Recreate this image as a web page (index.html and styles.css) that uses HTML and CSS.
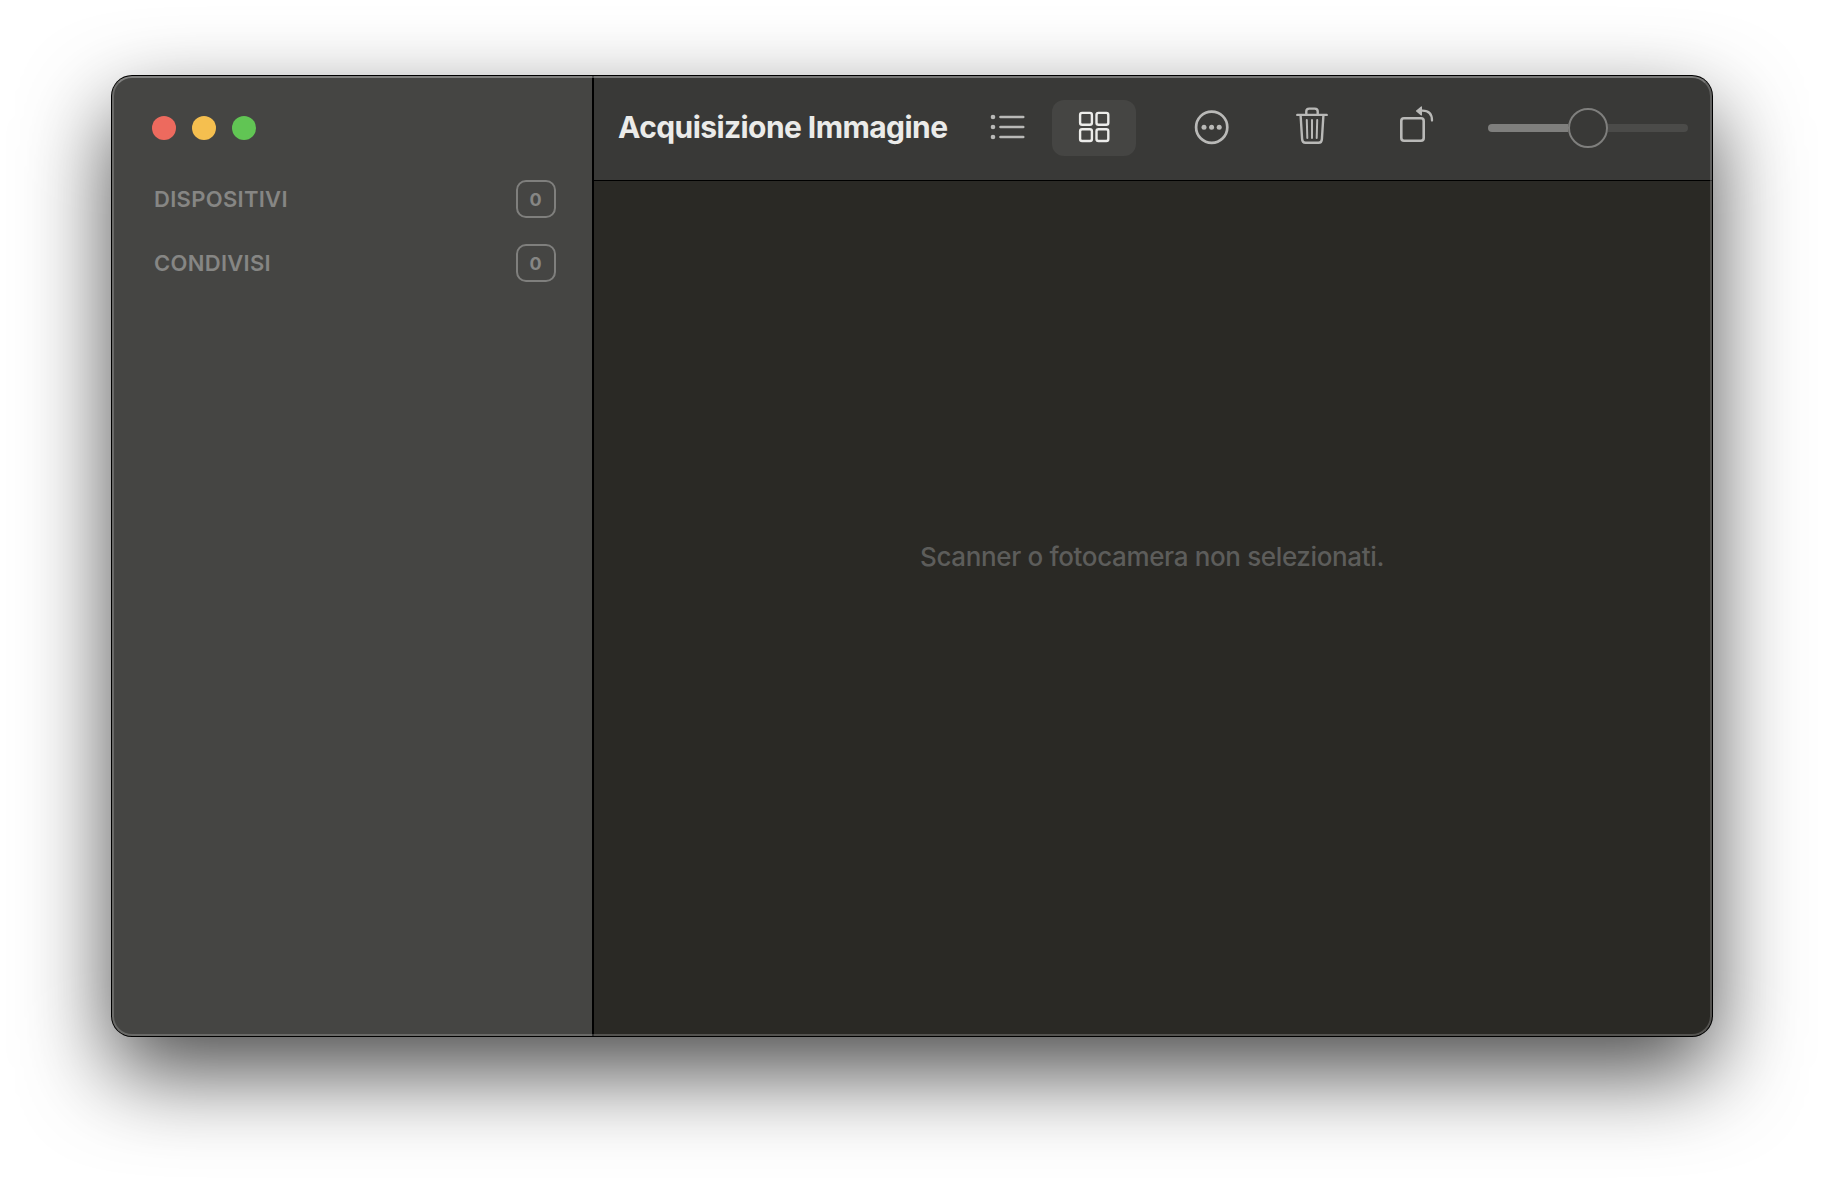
FILE: index.html
```html
<!DOCTYPE html>
<html lang="it">
<head>
<meta charset="utf-8">
<title>Acquisizione Immagine</title>
<link rel="stylesheet" href="styles.css">
</head>
<body>
<div class="window">
  <aside class="sidebar">
    <div class="lights">
      <span class="light close"></span>
      <span class="light minimize"></span>
      <span class="light expand"></span>
    </div>
    <div class="section"><span class="label devices">DISPOSITIVI</span><span class="badge">0</span></div>
    <div class="section"><span class="label shared">CONDIVISI</span><span class="badge">0</span></div>
  </aside>
  <main class="main">
    <header class="toolbar">
      <h1 class="title">Acquisizione Immagine</h1>
      <button class="tool list" aria-label="Elenco">
        <svg width="84" height="56" viewBox="0 0 84 56">
          <g fill="currentColor"><circle cx="25" cy="17" r="2.3"/><circle cx="25" cy="27" r="2.3"/><circle cx="25" cy="37" r="2.3"/></g>
          <path d="M32.5 17H55.2M32.5 27H55.2M32.5 37H55.2" fill="none" stroke="currentColor" stroke-width="2.7" stroke-linecap="round"/>
        </svg>
      </button>
      <button class="tool grid" aria-label="Griglia">
        <svg width="84" height="56" viewBox="0 0 84 56" fill="none" stroke="currentColor" stroke-width="2.4">
          <rect x="28.1" y="12.9" width="11.8" height="11.8" rx="2"/><rect x="44.5" y="12.9" width="11.8" height="11.8" rx="2"/>
          <rect x="28.1" y="29.2" width="11.8" height="11.8" rx="2"/><rect x="44.5" y="29.2" width="11.8" height="11.8" rx="2"/>
        </svg>
      </button>
      <button class="tool more" aria-label="Altro">
        <svg width="36" height="36" viewBox="0 0 36 36">
          <circle cx="17.7" cy="17.2" r="15.6" fill="none" stroke="currentColor" stroke-width="2.7"/>
          <g fill="currentColor"><circle cx="10" cy="17.3" r="2.5"/><circle cx="17.6" cy="17.3" r="2.5"/><circle cx="25.2" cy="17.3" r="2.5"/></g>
        </svg>
      </button>
      <button class="tool trash" aria-label="Elimina">
        <svg width="36" height="44" viewBox="0 0 36 44" fill="none" stroke="currentColor" stroke-linecap="round" stroke-linejoin="round">
          <path d="M3.3 8.9H32.7M12.3 8.5V5.6Q12.3 2.6 15.2 2.6H20.8Q23.7 2.6 23.7 5.6V8.5M6.6 9.5L8.1 33.1Q8.3 36.8 11.5 36.8H24.5Q27.7 36.8 27.9 33.1L29.4 9.5" stroke-width="2.4"/>
          <path d="M12.8 14L13.3 32M18 14V32M23.2 14L22.7 32" stroke-width="2"/>
        </svg>
      </button>
      <button class="tool rotate" aria-label="Ruota">
        <svg width="38" height="44" viewBox="0 0 38 44" fill="none" stroke="currentColor" stroke-width="2.6">
          <rect x="3.3" y="12.3" width="22.4" height="22.4" rx="2.7"/>
          <path d="M22.5 4.7H24.5Q34 4.7 34 14.5" stroke-width="2.3" stroke-linecap="round"/>
          <path d="M18.6 5L23.4 1V9Z" fill="currentColor" stroke-width="1.2" stroke-linejoin="round"/>
        </svg>
      </button>
      <div class="slider"><span class="fill"></span><span class="knob"></span><span class="rest"></span></div>
    </header>
    <section class="content"><p class="message">Scanner o fotocamera non selezionati.</p></section>
  </main>
</div>
</body>
</html>
```
FILE: styles.css
```css
* { box-sizing: border-box; }
body {
  margin: 0;
  height: 1184px;
  padding: 76px 112px 148px;
  overflow: hidden;
  background: #fff;
  font-family: Inter, "Liberation Sans", sans-serif;
}
.window {
  position: relative;
  display: flex;
  width: 1600px;
  height: 960px;
  border-radius: 20px;
  overflow: hidden;
  background: #2a2925;
  box-shadow: 0 0 0 1px #000, 0 36px 88px rgba(0, 0, 0, .71);
}
/* light inner rim drawn over both panes */
.window::after {
  content: "";
  position: absolute;
  inset: 0;
  border-radius: 20px;
  border: 2px solid rgba(255, 255, 255, .2);
  border-top-color: rgba(255, 255, 255, .32);
  pointer-events: none;
}
.sidebar {
  width: 482px;
  padding: 40px 36px 0 40px;
  background: #454543;
  border-right: 2px solid #000;
}
.lights { display: flex; gap: 16px; height: 64px; }
.light { width: 24px; height: 24px; border-radius: 50%; }
.close { background: #ed6a5e; }
.minimize { background: #f5bf4f; }
.expand { background: #61c554; }
.section {
  display: flex;
  align-items: center;
  justify-content: space-between;
  height: 38px;
  margin-bottom: 26px;
  padding-left: 2px;
  color: #868684;
}
.label { font-size: 22px; font-weight: 600; line-height: 38px; letter-spacing: .3px; }
.badge {
  width: 40px;
  height: 38px;
  padding-right: 1px;
  border: 2px solid #7f7f7d;
  border-radius: 10px;
  font-size: 18px;
  font-weight: 650;
  line-height: 35px;
  letter-spacing: 0;
  text-align: center;
}
.main { flex: 1; display: flex; flex-direction: column; }
.toolbar {
  display: flex;
  align-items: center;
  height: 105px;
  padding-left: 24px;
  background: #393937;
  border-bottom: 1px solid #000;
  color: #b9b9b7;
}
.title {
  width: 350px;
  margin: 0;
  padding-bottom: 2px;
  font-size: 30px;
  font-weight: 700;
  line-height: 40px;
  letter-spacing: -.58px;
  white-space: nowrap;
  color: #ebebe9;
}
.tool { display: flex; padding: 0; border: 0; background: none; color: inherit; }
.grid { border-radius: 12px; background: #454543; color: #ececea; }
.more { margin-left: 58px; }
.trash { margin-left: 64px; }
.rotate { margin-left: 68px; }
.slider { display: flex; align-items: center; width: 200px; margin-left: 52px; }
.fill { width: 80px; height: 8px; border-radius: 4px 0 0 4px; background: #7f7f7d; }
.knob { width: 40px; height: 40px; border: 2px solid #7f7f7d; border-radius: 50%; }
.rest { width: 80px; height: 8px; border-radius: 0 4px 4px 0; background: #4b4b49; }
.content { flex: 1; padding: 356px 2px 0 0; text-align: center; }
.message { margin: 0; font-size: 26px; font-weight: 450; line-height: 40px; letter-spacing: -.36px; color: #5d5d5b; }
```
